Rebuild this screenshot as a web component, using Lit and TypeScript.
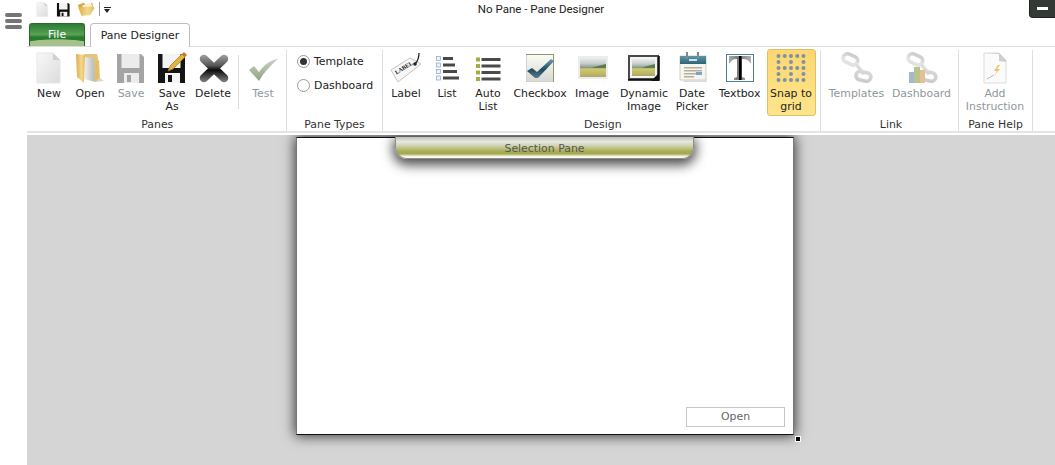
import { LitElement, html, css, svg } from 'lit';
import { customElement } from 'lit/decorators.js';

const defs = svg`
  <defs>
    <linearGradient id="page" x1="0" y1="0" x2="1" y2="1"><stop offset="0" stop-color="#f8f8f8"/><stop offset="1" stop-color="#dcdcdc"/></linearGradient>
    <linearGradient id="fold" x1="0" y1="0" x2="1" y2="0"><stop offset="0" stop-color="#dcae4c"/><stop offset=".6" stop-color="#f3d98c"/><stop offset="1" stop-color="#e2bb62"/></linearGradient>
    <linearGradient id="leaf" x1="0" y1="0" x2="1" y2="0"><stop offset="0" stop-color="#f2f2f0"/><stop offset="1" stop-color="#b4b8b8"/></linearGradient>
    <linearGradient id="cross" gradientUnits="userSpaceOnUse" x1="0" y1="2" x2="0" y2="31"><stop offset="0" stop-color="#a6a6a6"/><stop offset=".4" stop-color="#555"/><stop offset=".55" stop-color="#0c0c0c"/><stop offset=".75" stop-color="#444"/><stop offset="1" stop-color="#8a8a8a"/></linearGradient>
    <linearGradient id="green" x1="0" y1="0" x2="0" y2="1"><stop offset="0" stop-color="#cdd3c2"/><stop offset="1" stop-color="#8ea382"/></linearGradient>
    <linearGradient id="sky" x1="0" y1="0" x2="0" y2="1"><stop offset="0" stop-color="#eceeec"/><stop offset=".3" stop-color="#c4ccc8"/><stop offset=".5" stop-color="#8b9c8c"/><stop offset=".58" stop-color="#cdc970"/><stop offset=".8" stop-color="#c2bb5c"/><stop offset="1" stop-color="#aaa67a"/></linearGradient>
    <linearGradient id="cal" x1="0" y1="0" x2="0" y2="1"><stop offset="0" stop-color="#5f97a8"/><stop offset="1" stop-color="#2c6478"/></linearGradient>
    <linearGradient id="tee" x1="0" y1="0" x2="1" y2="0"><stop offset="0" stop-color="#a8a8a8"/><stop offset=".44" stop-color="#777"/><stop offset=".46" stop-color="#000"/><stop offset=".56" stop-color="#000"/><stop offset=".58" stop-color="#888"/><stop offset="1" stop-color="#b4b4b4"/></linearGradient>
    <linearGradient id="box" x1="0" y1="0" x2="0" y2="1"><stop offset="0" stop-color="#fbfbf6"/><stop offset="1" stop-color="#d8d8d4"/></linearGradient>
    <linearGradient id="tick" x1="0" y1="0" x2="0" y2="1"><stop offset="0" stop-color="#6f9db6"/><stop offset=".55" stop-color="#1f4a60"/><stop offset="1" stop-color="#5e7a88"/></linearGradient>
    <linearGradient id="pale" gradientUnits="userSpaceOnUse" x1="0" y1="0" x2="0" y2="32"><stop offset="0" stop-color="#c6c6c6"/><stop offset=".3" stop-color="#e4e4e4"/><stop offset="1" stop-color="#c8c8c8"/></linearGradient>
  </defs>`;

const disk = (body: string, plate: string) => svg`
  <path d="M2 2h24l3 3v26H2z" fill="${body}"/>
  <rect x="6.500" y="2" width="18" height="14" fill="${plate}"/>
  <rect x="9" y="21" width="15" height="10" fill="${plate}"/>
  <rect x="12" y="23" width="4" height="7" fill="${body}"/>`;

const chain = svg`
  <g fill="none" stroke="url(#pale)" stroke-width="3.600" stroke-linecap="round">
    <rect x="2" y="3" width="15" height="8.500" rx="4.200" transform="rotate(24 9 7)"/>
    <path d="M15 12l7 9"/>
    <rect x="15" y="20" width="15" height="8.500" rx="4.200" transform="rotate(12 22 24)"/>
  </g>`;

const icons: Record<string, unknown> = {
  new: svg`<path d="M4 1h16l7 7v23H4z" fill="url(#page)" stroke="#e6e6e6"/><path d="M20 1v7h7z" fill="#d0d0d0"/>`,
  open: svg`
    <path d="M10 2h13l1 4v20H10z" fill="#e3c677"/>
    <path d="M10 5l10 1 1 24-11-3z" fill="url(#leaf)"/>
    <path d="M21 10l4-2 1 20-5 2z" fill="#e5bf68"/>
    <path d="M26 26l4 3-9 1z" fill="#d6d6d6"/>
    <path d="M2 2l9 1-1 28-7-6z" fill="url(#fold)"/>`,
  save: disk('#a4a4a4', '#ececec'),
  saveAs: svg`${disk('#141414', '#f4f4f4')}
    <path d="M14 14L26 2l3 3-12 12-5 2z" fill="#e4b53c" stroke="#9a7424" stroke-width=".7"/><path d="M26 2l2-2 3 3-2 2z" fill="#c9772e"/>`,
  delete: svg`<path d="M7 7l20 19M27 7L7 26" fill="none" stroke="url(#cross)" stroke-width="8.500" stroke-linecap="round"/>`,
  test: svg`<path d="M2 18l5-4 5 6C17 13 23 8 31 7 24 13 17 20 12 29z" fill="url(#green)"/>`,
  label: svg`
    <path d="M1 18L20 6l11 6L8 30z" fill="#f6f6f6" stroke="#c4c4c4"/>
    <text x="6.500" y="22.500" font-size="5.800" font-weight="700" font-family="Liberation Serif, serif" fill="#111" transform="rotate(-32 6.500 22.500)">LABEL</text>
    <path d="M25 12c2-2 4-6 4-11" fill="none" stroke="#222" stroke-width="1.300"/><circle cx="25" cy="12" r="1.800" fill="#222"/>`,
  list: svg`
    <g fill="#eef3f7" stroke="#8aa4bc" stroke-width=".7">
      <rect x="5.500" y="4.500" width="4" height="4"/><rect x="5.500" y="11" width="4" height="4"/><rect x="5.500" y="17.500" width="4" height="4"/><rect x="5.500" y="24" width="4" height="4"/>
    </g>
    <g fill="#484848"><rect x="12" y="5" width="10" height="3"/><rect x="12" y="11.500" width="12" height="3"/><rect x="12" y="18" width="14" height="3"/><rect x="12" y="24.500" width="16" height="3"/></g>`,
  autoList: svg`
    <g fill="#a3ad42"><rect x="4" y="5.500" width="4" height="4"/><rect x="4" y="12" width="4" height="4"/><rect x="4" y="18.500" width="4" height="4"/><rect x="4" y="25" width="4" height="4"/></g>
    <g fill="#4a4a4a"><rect x="9.500" y="6" width="19" height="3"/><rect x="9.500" y="12.500" width="19" height="3"/><rect x="9.500" y="19" width="19" height="3"/><rect x="9.500" y="25.500" width="19" height="3"/></g>`,
  checkbox: svg`
    <rect x="2.500" y="2.500" width="27" height="27" fill="url(#box)" stroke="#8b9a66"/>
    <path d="M29 29.500H2.500V3" fill="none" stroke="#d2d2ce"/>
    <path d="M3 19l5-3 5 4L27 7l3 2-16 17h-3z" fill="url(#tick)"/>`,
  image: svg`<rect x="2" y="4" width="30" height="23" fill="#ededed"/><rect x="4" y="6" width="26" height="19" fill="url(#sky)"/><path d="M18 15l12-3v4H16z" fill="#5f7a52"/>`,
  dynImage: svg`
    <rect x="1" y="4" width="29" height="23" fill="#f4f4f4" stroke="#4a4a4a" stroke-width="2"/>
    <path d="M0 28h31V4" fill="none" stroke="#000" stroke-width="1.500"/>
    <rect x="4" y="7" width="23" height="17" fill="url(#sky)"/><path d="M16 15l11-3v4H14z" fill="#5f7a52"/><path d="M31 21v8h-8z" fill="#111"/>`,
  date: svg`
    <rect x="4" y="4" width="26" height="24" fill="#f6f6f0" stroke="#cfcfc8"/>
    <path d="M8 28h22l1 2H7z" fill="#dcdcd6"/>
    <rect x="4" y="4" width="26" height="8" fill="url(#cal)"/>
    <rect x="10" y="0" width="2" height="7" fill="#7a8a90"/><rect x="21" y="0" width="2" height="7" fill="#7a8a90"/>
    <rect x="13" y="7" width="8" height="2" fill="#cfe0e6"/>
    <g fill="#b8ae98">
      <rect x="8" y="15" width="18" height="1.500"/><rect x="8" y="18" width="18" height="1.500"/><rect x="8" y="21" width="13" height="1.500"/><rect x="8" y="24" width="10" height="1.500"/>
    </g>
    <rect x="20" y="20" width="6" height="3" fill="#72a8cc"/>`,
  textbox: svg`
    <rect x="2.500" y="2.500" width="27" height="27" fill="#fff" stroke="#4c8398"/>
    <path d="M5 4h22v7h-1c-1-2-3-4-7-4h-1v18l3 1v2H10v-2l3-1V7h-1C9 7 7 9 6 11H5z" fill="url(#tee)"/>`,
  snap: svg`<g fill="#7d92aa">${[0, 1, 2, 3, 4].flatMap(r => [0, 1, 2, 3, 4]
    .filter(c => r % 2 === 0 || c % 2 === 0)
    .map(c => svg`<circle cx="${3.500 + c * 6.250}" cy="${4 + r * 6}" r="2"/>`))}</g>`,
  templates: chain,
  dashLink: svg`${chain}<rect x="3" y="20" width="5" height="11" fill="#a3b9d0"/><rect x="8" y="15" width="6" height="16" fill="#b9c48c"/><rect x="14" y="18" width="5" height="13" fill="#e6c094"/>`,
  instruction: svg`
    <path d="M5 1h15l7 7v23H5z" fill="#fbfbfb" stroke="#dcdcdc"/>
    <path d="M6 2h14v7l7 1v-2l-7-7" fill="#cfcfcf"/>
    <path d="M19 13l-4 6h3l-3 5 6-7h-3l3-4z" fill="#eec45e"/><path d="M8 27l7-4" stroke="#bbb"/>`,
  qatSave: disk('#111', '#f4f4f4'),
  qatOpen: svg`
    <path d="M1 9l11-4 3 3 12-3 2 8-22 7z" fill="#d9a93f"/>
    <path d="M9 10l15-6 4 8-14 6z" fill="#f6f2e2"/>
    <path d="M2 13l27-2 2 4-8 12-15 1z" fill="url(#fold)"/>`,
};

interface Tool { icon: string; lines: string[]; size?: string; off?: boolean; on?: boolean; }

const icon = (name: string, cls = 'ico') =>
  html`<svg class=${cls} viewBox="0 0 32 32">${icons[name]}</svg>`;

@customElement('app-root')
export class AppRoot extends LitElement {
  static styles = css`
    :host {
      display: grid;
      grid-template-columns: 27px 1fr;
      height: 100vh;
      overflow: hidden;
      background: #fff;
      font-family: "DejaVu Sans", sans-serif;
      font-size: 10.900px;
      color: #222;
    }
    .rail { padding: 13px 0 0 5px; display: flex; flex-direction: column; gap: 2px; }
    .rail span { width: 17px; height: 4px; border-radius: 2px; background: #757575; }
    .main { display: flex; flex-direction: column; min-width: 0; }

    .titlebar { height: 23px; display: grid; grid-template-columns: 1fr auto 1fr; flex: none; }
    .qat { display: flex; align-items: flex-start; padding: 2px 0 0 8px; }
    .qat svg { width: 15px; height: 15px; margin-right: 6px; flex: none; }
    .qat svg.wide { width: 18px; height: 18px; margin: -2px 4px 0 0; }
    .qat .sep { width: 1px; height: 14px; background: #999; margin-right: 4px; }
    .qat .drop { margin-top: 5px; width: 7px; border-top: 1px solid #222; }
    .qat .drop::after {
      content: ''; display: block; margin-top: 1px; width: 0; height: 0;
      border: 3.500px solid transparent; border-top: 4px solid #222; border-bottom: 0;
    }
    .title { font-family: Roboto, sans-serif; font-size: 11.500px; padding-top: 2px; }
    .win { justify-self: end; width: 26px; height: 18px; background: #333a36; border: 1px solid #222; border-top: 0; border-right: 0; border-bottom-left-radius: 4px; box-sizing: border-box; display: flex; align-items: center; justify-content: center; }
    .win i { width: 11px; height: 3px; background: #fff; }

    .tabs { height: 23px; flex: none; display: flex; gap: 5px; padding-left: 2px; border-bottom: 1px solid #dcdcdc; }
    .file {
      width: 56px; height: 23px; box-sizing: border-box; border: 1px solid #2c6a2c; border-bottom: 0;
      border-radius: 3px 3px 0 0; color: #fff; text-align: center; line-height: 22px;
      background: radial-gradient(ellipse 40px 7px at 50% 100%, #a5c28c 0 90%, transparent 100%),
        linear-gradient(#2b7d33, #57a255 48%, #2a7a30 60%, #2c7f34);
    }
    .tab {
      width: 100px; height: 24px; box-sizing: border-box; border: 1px solid #bdbdbd; border-bottom: 0;
      border-radius: 4px 4px 0 0; background: #fff; text-align: center; line-height: 23px;
    }

    .ribbon { flex: none; height: 86px; display: flex; border-bottom: 2px solid #e4e4e4; margin-bottom: 2px; box-sizing: border-box; }
    .group { flex: none; display: flex; flex-direction: column; height: 81px; margin-top: 3px; border-right: 1px solid #dedede; box-sizing: border-box; }
    .tools { flex: 1; display: flex; align-items: flex-start; }
    .caption { text-align: center; height: 14px; line-height: 16px; color: #333; }
    .panes { width: 260px; padding-left: 1.500px; }
    .types { width: 96px; }
    .design { width: 438px; padding-left: 2.500px; }
    .link { width: 138px; padding-left: 3px; }
    .help { width: 74px; }

    .tool { flex: none; width: 41px; display: flex; flex-direction: column; align-items: center; line-height: 13px; text-align: center; padding-top: 2px; height: 66px; box-sizing: border-box; }
    .tool.w33 { width: 33px; }
    .tool.w48 { width: 48px; }
    .tool.w63 { width: 63px; }
    .tool.w65 { width: 65px; }
    .tool.w72 { width: 72px; }
    .tool.off { color: #8f979c; }
    .ico { width: 32px; height: 32px; margin-bottom: 3px; flex: none; }
    .tool.on { width: 49px; height: 67px; margin: -1px 0 0 3px; background: linear-gradient(#fdd76e, #fde58c); border: 1px solid #dcc06c; border-radius: 3px; box-sizing: border-box; padding-top: 2px; }
    .vsep { flex: none; width: 1px; height: 54px; margin: 5px 8px 0 4px; background: #dcdcdc; }
    .gap7 { flex: none; width: 7px; }

    .radios { flex: 1; display: flex; flex-direction: column; gap: 10px; padding: 4px 0 0 10px; }
    .radio { display: flex; align-items: center; gap: 4px; height: 14px; }
    .radio i { width: 11px; height: 11px; border: 1px solid #9a9a9a; border-radius: 50%; background: #fff; display: flex; align-items: center; justify-content: center; }
    .radio.sel i::after { content: ''; width: 7px; height: 7px; border-radius: 50%; background: #333; }

    .canvas { flex: 1; background: #d4d5d4; padding: 2px 0 0 269px; overflow: hidden; }
    .sheet {
      position: relative; width: 498px; height: 298px; box-sizing: border-box; background: #fff;
      border: 1px solid #111; border-left-color: #777; border-right-color: #777;
      box-shadow: 0 0 12px 1px rgba(0,0,0,.75);
      display: flex; align-items: flex-end; justify-content: flex-end; padding: 0 8px 7px 0;
    }
    .selection {
      position: absolute; left: 98px; top: -1px; width: 299px; height: 22px; box-sizing: border-box;
      border-radius: 0 0 12px 12px; text-align: center; line-height: 23px; color: #555; border: 1px solid #8c8c8c; border-top: 0;
      background: linear-gradient(#bdbdbd, #e8e8e0 22%, #cfd2ae 42%, #a9ad52 68%, #a5a94e 80%, #f2f2e6 92%, #fff);
      box-shadow: 0 4px 12px 2px rgba(0,0,0,.7);
    }
    .open { width: 99px; height: 20px; box-sizing: border-box; border: 1px solid #c6c6c6; background: #fff; color: #666; text-align: center; line-height: 18px; }
    .handle { position: absolute; right: -8px; bottom: -8px; width: 6px; height: 6px; box-sizing: border-box; background: #000; border: 1px solid #fff; }
  `;

  private tool(t: Tool) {
    const cls = `tool ${t.size ?? ''} ${t.off ? 'off' : ''} ${t.on ? 'on' : ''}`;
    return html`<div class=${cls}>${icon(t.icon)}${t.lines.map(l => html`<div>${l}</div>`)}</div>`;
  }

  render() {
    const panes: Tool[] = [
      { icon: 'new', lines: ['New'] },
      { icon: 'open', lines: ['Open'] },
      { icon: 'save', lines: ['Save'], off: true },
      { icon: 'saveAs', lines: ['Save', 'As'] },
      { icon: 'delete', lines: ['Delete'] },
    ];
    const design: Tool[] = [
      { icon: 'label', lines: ['Label'] },
      { icon: 'list', lines: ['List'] },
      { icon: 'autoList', lines: ['Auto', 'List'] },
      { icon: 'checkbox', lines: ['Checkbox'], size: 'w63' },
      { icon: 'image', lines: ['Image'] },
      { icon: 'dynImage', lines: ['Dynamic', 'Image'], size: 'w63' },
      { icon: 'date', lines: ['Date', 'Picker'], size: 'w33' },
    ];
    return html`
      <svg width="0" height="0" style="position:absolute">${defs}</svg>
      <div class="rail"><span></span><span></span><span></span></div>
      <div class="main">
        <div class="titlebar">
          <div class="qat">
            ${icon('new', '')}${icon('qatSave', '')}${icon('qatOpen', 'wide')}
            <span class="sep"></span><span class="drop"></span>
          </div>
          <div class="title">No Pane - Pane Designer</div>
          <div class="win"><i></i></div>
        </div>
        <div class="tabs">
          <div class="file">File</div>
          <div class="tab">Pane Designer</div>
        </div>
        <div class="ribbon">
          <div class="group panes">
            <div class="tools">
              ${panes.map(t => this.tool(t))}
              <span class="vsep"></span>
              ${this.tool({ icon: 'test', lines: ['Test'], off: true, size: 'w33' })}
            </div>
            <div class="caption">Panes</div>
          </div>
          <div class="group types">
            <div class="radios">
              <div class="radio sel"><i></i>Template</div>
              <div class="radio"><i></i>Dashboard</div>
            </div>
            <div class="caption">Pane Types</div>
          </div>
          <div class="group design">
            <div class="tools">
              ${design.map(t => this.tool(t))}
              <span class="gap7"></span>
              ${this.tool({ icon: 'textbox', lines: ['Textbox'], size: 'w48' })}
              ${this.tool({ icon: 'snap', lines: ['Snap to', 'grid'], on: true })}
            </div>
            <div class="caption">Design</div>
          </div>
          <div class="group link">
            <div class="tools">
              ${this.tool({ icon: 'templates', lines: ['Templates'], off: true, size: 'w65' })}
              ${this.tool({ icon: 'dashLink', lines: ['Dashboard'], off: true, size: 'w65' })}
            </div>
            <div class="caption">Link</div>
          </div>
          <div class="group help">
            <div class="tools">
              ${this.tool({ icon: 'instruction', lines: ['Add', 'Instruction'], off: true, size: 'w72' })}
            </div>
            <div class="caption">Pane Help</div>
          </div>
        </div>
        <div class="canvas">
          <div class="sheet">
            <div class="selection">Selection Pane</div>
            <div class="open">Open</div>
            <div class="handle"></div>
          </div>
        </div>
      </div>
    `;
  }
}
